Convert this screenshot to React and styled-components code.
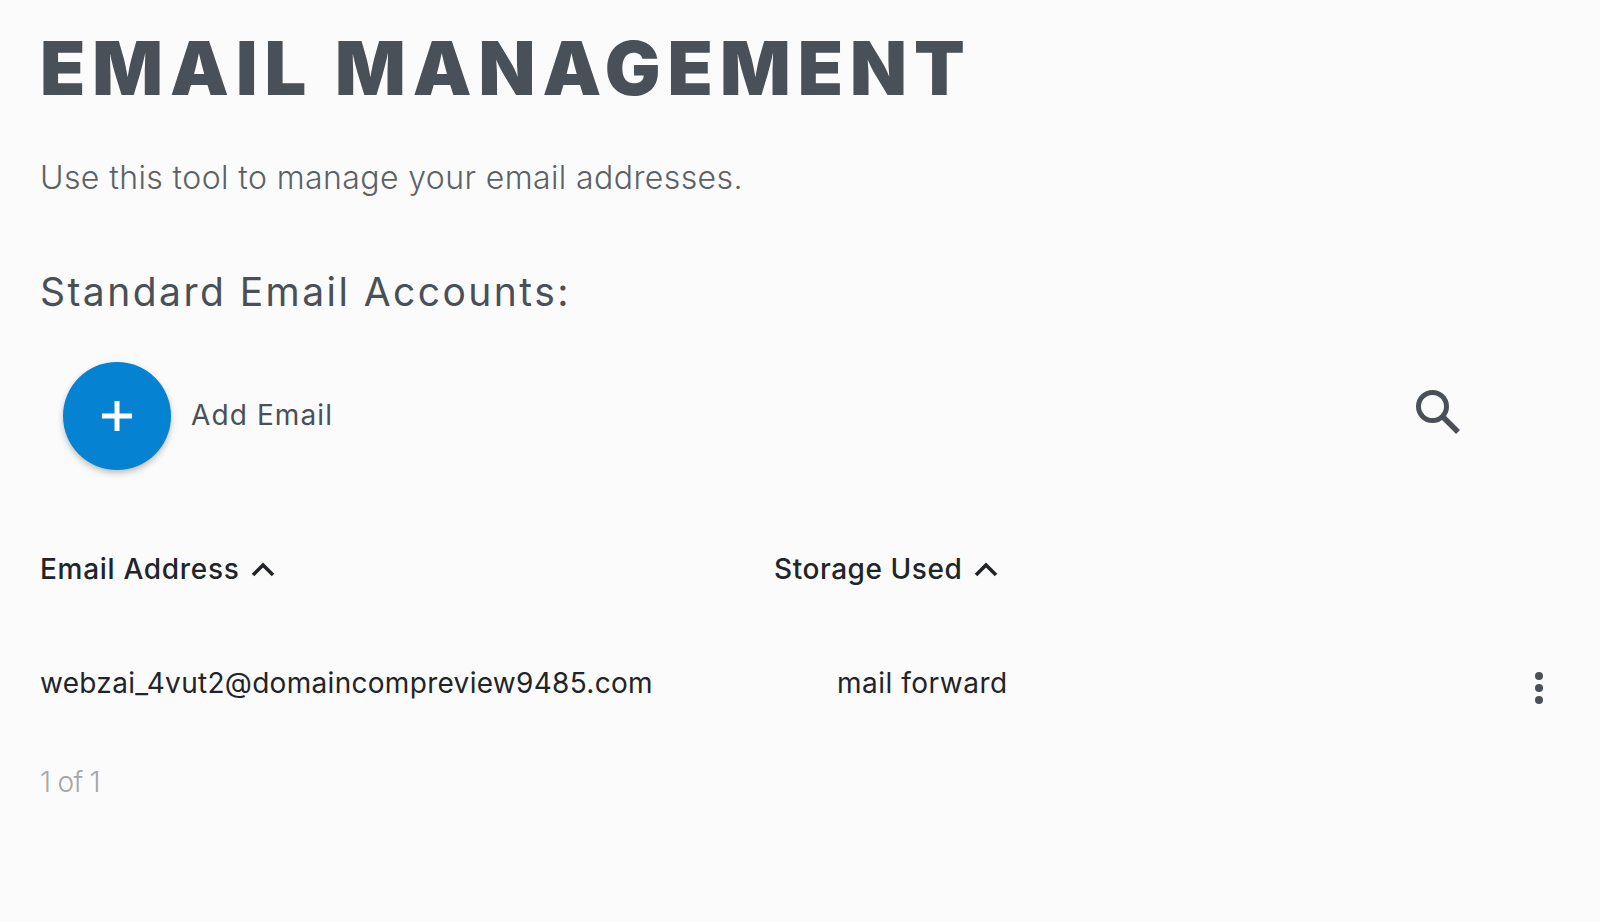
import React from 'react'
import styled, { createGlobalStyle } from 'styled-components'

const GlobalStyle = createGlobalStyle`
  html, body {
    margin: 0;
    background: #fbfbfb;
    font-family: "Inter", "Liberation Sans", sans-serif;
  }
`

const Page = styled.div`
  height: 922px;
  overflow: hidden;
  box-sizing: border-box;
  padding: 23px 0 0 40px;
`

const Title = styled.h1`
  margin: 0;
  font-size: 74px;
  line-height: 90px;
  font-weight: 900;
  letter-spacing: 7px;
  color: #495057;
`

const Intro = styled.p`
  margin: 45px 0 0;
  font-size: 32px;
  line-height: 40px;
  font-weight: 300;
  letter-spacing: 0.4px;
  color: #5c6166;
`

const SectionTitle = styled.h2`
  margin: 71px 0 0;
  font-size: 39px;
  line-height: 46px;
  font-weight: 400;
  letter-spacing: 2.45px;
  color: #495057;
`

const Toolbar = styled.div`
  display: flex;
  align-items: center;
  margin-top: 47px;
  padding: 0 140px 0 23px;
`

const Fab = styled.button`
  display: flex;
  align-items: center;
  justify-content: center;
  width: 108px;
  height: 108px;
  padding: 0;
  border: 0;
  border-radius: 50%;
  background: #0583d2;
  box-shadow: 0 3px 6px rgba(0, 0, 0, 0.25);
`

const AddLabel = styled.span`
  margin: -2px 0 0 20px;
  font-size: 28px;
  letter-spacing: 1.1px;
  color: #495057;
`

const SearchButton = styled.div`
  margin: -8px 0 0 auto;
  height: 44px;
`

const Row = styled.div`
  display: grid;
  grid-template-columns: 734px 1fr 65px;
  align-items: center;
`

const HeaderRow = styled(Row)`
  margin-top: 77px;
  height: 44px;
`

const HeaderCell = styled.div`
  display: flex;
  align-items: center;
  gap: 12px;
  font-size: 28px;
  font-weight: 500;
  letter-spacing: ${p => p.$tracking}px;
  color: #212529;
`

const BodyRow = styled(Row)`
  margin-top: 70px;
  height: 44px;
`

const BodyCell = styled.div`
  font-size: 28px;
  letter-spacing: ${p => p.$tracking}px;
  color: #212529;
  padding-left: ${p => p.$indent || 0}px;
`

const Dots = styled.div`
  display: flex;
  flex-direction: column;
  gap: 4px;
  align-items: center;
  width: 8px;
  margin: 10px 0 0 0;
  i {
    width: 8px;
    height: 8px;
    border-radius: 50%;
    background: #495057;
  }
`

const Pager = styled.div`
  margin-top: 60px;
  font-size: 28px;
  font-weight: 300;
  letter-spacing: -0.7px;
  color: #a3a6a9;
`

const Plus = () => (
  <svg width="30" height="30" viewBox="0 0 30 30">
    <path d="M15 0v30M0 15h30" stroke="#fff" strokeWidth="5" fill="none" />
  </svg>
)

const SearchIcon = () => (
  <svg width="44" height="44" viewBox="0 0 44 44" fill="none" stroke="#495057">
    <circle cx="16.5" cy="16.5" r="14" strokeWidth="5" />
    <path d="M27 27l15 15" strokeWidth="5.5" />
  </svg>
)

const Chevron = () => (
  <svg width="24" height="16" viewBox="0 0 24 16" fill="none" stroke="#212529">
    <path d="M2 14L12 4l10 10" strokeWidth="3.6" />
  </svg>
)

export default function App() {
  return (
    <Page>
      <GlobalStyle />
      <Title>EMAIL MANAGEMENT</Title>
      <Intro>Use this tool to manage your email addresses.</Intro>
      <SectionTitle>Standard Email Accounts:</SectionTitle>
      <Toolbar>
        <Fab aria-label="Add Email"><Plus /></Fab>
        <AddLabel>Add Email</AddLabel>
        <SearchButton><SearchIcon /></SearchButton>
      </Toolbar>
      <HeaderRow>
        <HeaderCell $tracking={0.7}>Email Address <Chevron /></HeaderCell>
        <HeaderCell $tracking={0.55}>Storage Used <Chevron /></HeaderCell>
      </HeaderRow>
      <BodyRow>
        <BodyCell $tracking={0.3}>webzai_4vut2@domaincompreview9485.com</BodyCell>
        <BodyCell $tracking={0.5} $indent={63}>mail forward</BodyCell>
        <Dots><i /><i /><i /></Dots>
      </BodyRow>
      <Pager>1 of 1</Pager>
    </Page>
  )
}
